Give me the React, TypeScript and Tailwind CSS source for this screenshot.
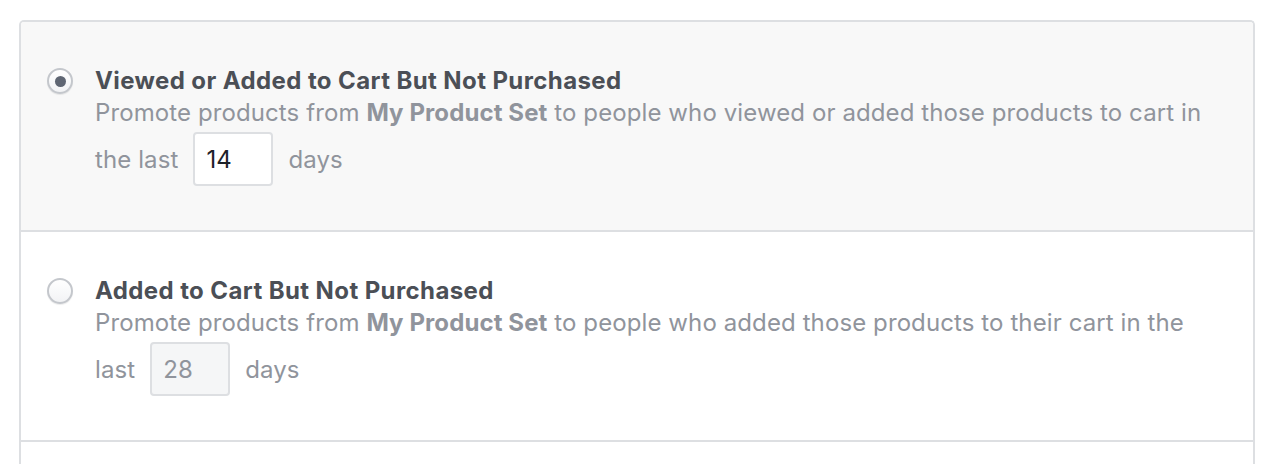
import React, { useState } from 'react';

type Option = {
  id: string;
  title: string;
  before: string;
  after: string;
  tail: string;
  days: string;
};

const options: Option[] = [
  {
    id: 'viewed',
    title: 'Viewed or Added to Cart But Not Purchased',
    before: 'Promote products from ',
    after: ' to people who viewed or added those products to cart in the last',
    tail: 'days',
    days: '14',
  },
  {
    id: 'added',
    title: 'Added to Cart But Not Purchased',
    before: 'Promote products from ',
    after: ' to people who added those products to their cart in the last',
    tail: 'days',
    days: '28',
  },
];

const Radio: React.FC<{ checked: boolean }> = ({ checked }) => (
  <span className="-mt-[1px] flex h-[26px] w-[26px] shrink-0 items-center justify-center rounded-full border-2 border-[#c4c7cc] bg-gradient-to-b from-white to-[#f2f3f5] shadow-[0_1px_1px_rgba(0,0,0,0.08)]">
    {checked && <span className="h-[11px] w-[11px] rounded-full bg-[#5f6673]" />}
  </span>
);

const App: React.FC = () => {
  const [selected, setSelected] = useState('viewed');

  return (
    <div className="min-h-screen bg-white pl-[19px] pr-[25px] pt-[20px] font-['Inter',Arial,sans-serif]">
      <div className="overflow-hidden rounded-t-[5px] border-2 border-b-0 border-[#dddfe2]">
        {options.map((o) => {
          const active = selected === o.id;
          return (
            <div
              key={o.id}
              onClick={() => setSelected(o.id)}
              className={`flex h-[210px] items-start gap-[22px] border-b-2 border-[#dddfe2] pl-[26px] pt-[47px] ${
                active ? 'bg-[#f8f8f8]' : 'bg-white'
              }`}
            >
              <Radio checked={active} />
              <div className="w-[1115px]">
                <div className="text-[24px] font-bold leading-[24px] tracking-[0.4px] text-[#4b4f56]">
                  {o.title}
                </div>
                <p className="mt-[1px] text-[24px] leading-[38px] tracking-[0.1px] text-[#90949c]">
                  {o.before}
                  <span className="font-bold">My Product Set</span>
                  {o.after}
                  <input
                    defaultValue={o.days}
                    disabled={!active}
                    className={`mx-[15px] inline-block h-[54px] w-[80px] rounded-[4px] border-2 px-[11px] align-baseline text-[24px] outline-none ${
                      active
                        ? 'border-[#dddfe2] bg-white text-[#1d2129]'
                        : 'border-[#dddfe2] bg-[#f5f6f7] text-[#90949c]'
                    }`}
                  />
                  {o.tail}
                </p>
              </div>
            </div>
          );
        })}
        <div className="h-[40px] bg-white" />
      </div>
    </div>
  );
};

export default App;
